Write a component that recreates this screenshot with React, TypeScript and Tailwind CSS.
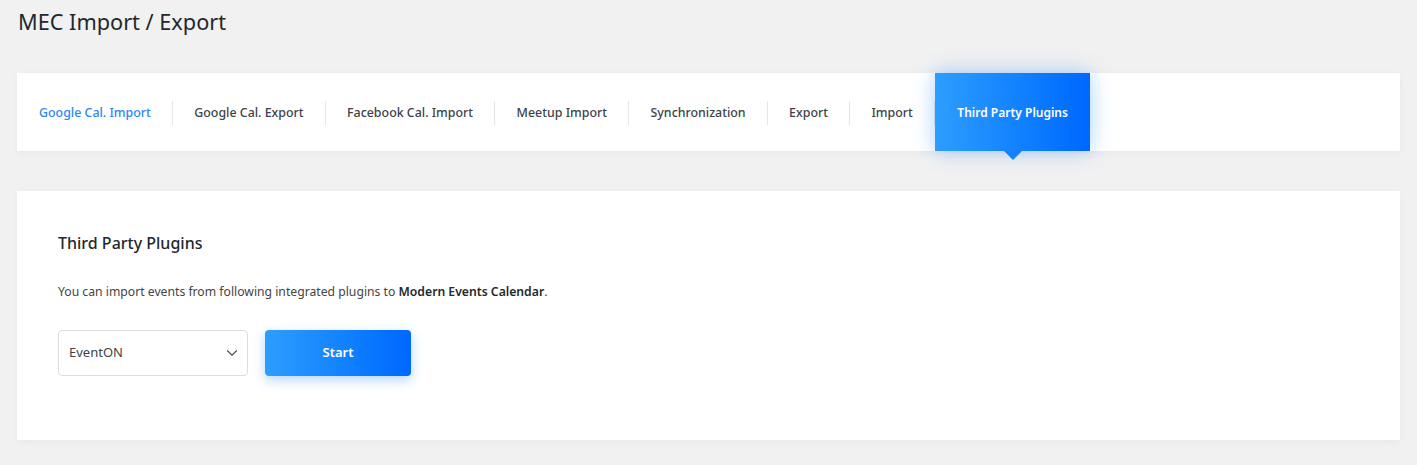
import { ChevronDown } from 'lucide-react';

const tabs = [
  'Google Cal. Import',
  'Google Cal. Export',
  'Facebook Cal. Import',
  'Meetup Import',
  'Synchronization',
  'Export',
  'Import',
];

export default function App() {
  return (
    <div
      className="min-h-[465px] bg-[#f1f1f1] px-[17px] pb-6 pt-[7px] text-[#23282d]"
      style={{ fontFamily: '"Noto Sans", "Open Sans", sans-serif' }}
    >
      <h1 className="pl-px text-[21.7px] font-normal leading-[29px] text-[#23282d]">MEC Import / Export</h1>

      {/* Tabs */}
      <div className="mt-[37px] flex h-[78px] items-stretch bg-white pl-[22px] pt-[2px] shadow-[0_2px_8px_rgba(0,0,0,0.04)]">
        {tabs.map((t, i) => (
          <div key={t} className="flex items-center">
            <a
              href="#"
              className={`text-[12.4px] font-medium ${i === 0 ? 'text-[#2b87f6]' : 'text-[#3c434a]'}`}
            >
              {t}
            </a>
            <span className="ml-[21px] mr-[21.5px] h-6 w-px bg-[#e6e6e6]" />
          </div>
        ))}
        <div className="relative -mt-[2px] -ml-[21px] flex items-center bg-gradient-to-r from-[#2d9dfe] to-[#0067ff] px-[22px] pt-[2px] shadow-[0_0_20px_rgba(0,123,255,0.35)]">
          <a href="#" className="text-[12px] font-semibold text-white">
            Third Party Plugins
          </a>
          <span className="absolute left-1/2 top-full -ml-[9px] h-0 w-0 border-x-[9px] border-t-[9px] border-x-transparent border-t-[#1482ff]" />
        </div>
      </div>

      {/* Content */}
      <div className="mt-10 bg-white px-[41px] pb-16 pt-[40px] shadow-[0_2px_8px_rgba(0,0,0,0.04)]">
        <h2 className="text-[16px] font-medium leading-6 text-[#23282d]">Third Party Plugins</h2>
        <p className="mt-[27px] text-[12.2px] leading-5 text-[#444]">
          You can import events from following integrated plugins to{' '}
          <strong className="font-semibold text-[#23282d]">Modern Events Calendar</strong>.
        </p>
        <div className="mt-[28px] flex items-center gap-[17px]">
          <div className="relative flex h-[46px] w-[190px] items-center rounded-sm border border-[#dddddd] bg-white pl-[10px] text-[13px] text-[#3c434a]">
            EventON
            <ChevronDown size={18} className="absolute right-[6px] text-[#555]" strokeWidth={1.6} />
          </div>
          <button className="flex h-[46px] w-[146px] items-center justify-center rounded-sm bg-gradient-to-r from-[#2d9dfe] to-[#0067ff] text-[13px] font-semibold text-white shadow-[0_4px_12px_rgba(0,123,255,0.3)]">
            Start
          </button>
        </div>
      </div>
    </div>
  );
}
